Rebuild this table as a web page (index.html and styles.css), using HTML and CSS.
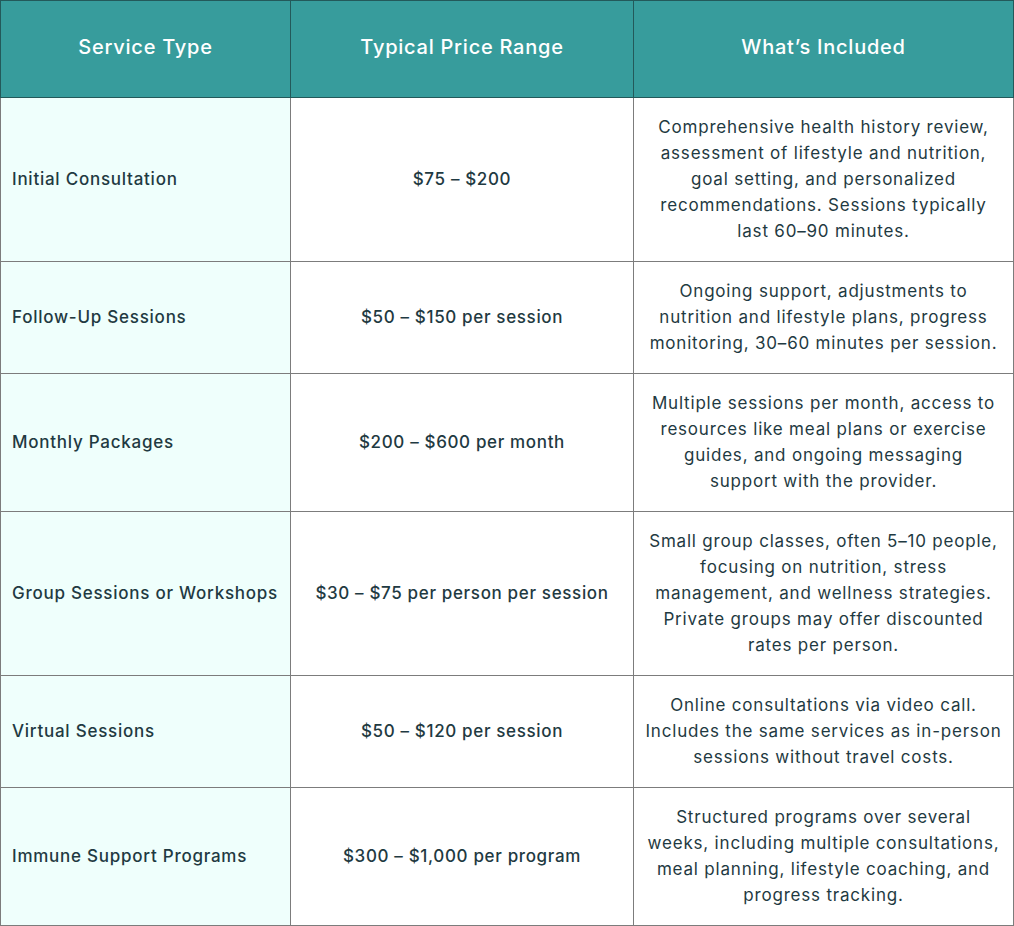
FILE: index.html
```html
<!DOCTYPE html>
<html lang="en">
<head>
<meta charset="utf-8">
<title>Service Pricing</title>
<link rel="stylesheet" href="styles.css">
</head>
<body>
<table class="pricing">
  <colgroup>
    <col class="c1">
    <col class="c2">
    <col class="c3">
  </colgroup>
  <thead>
    <tr>
      <th>Service Type</th>
      <th>Typical Price Range</th>
      <th>What’s Included</th>
    </tr>
  </thead>
  <tbody>
    <tr>
      <td class="name">Initial Consultation</td>
      <td class="price">$75 – $200</td>
      <td class="desc">Comprehensive health history review,<br>assessment of lifestyle and nutrition,<br>goal setting, and personalized<br>recommendations. Sessions typically<br>last 60–90 minutes.</td>
    </tr>
    <tr>
      <td class="name">Follow-Up Sessions</td>
      <td class="price">$50 – $150 per session</td>
      <td class="desc">Ongoing support, adjustments to<br>nutrition and lifestyle plans, progress<br>monitoring, 30–60 minutes per session.</td>
    </tr>
    <tr>
      <td class="name">Monthly Packages</td>
      <td class="price">$200 – $600 per month</td>
      <td class="desc">Multiple sessions per month, access to<br>resources like meal plans or exercise<br>guides, and ongoing messaging<br>support with the provider.</td>
    </tr>
    <tr>
      <td class="name">Group Sessions or Workshops</td>
      <td class="price">$30 – $75 per person per session</td>
      <td class="desc">Small group classes, often 5–10 people,<br>focusing on nutrition, stress<br>management, and wellness strategies.<br>Private groups may offer discounted<br>rates per person.</td>
    </tr>
    <tr>
      <td class="name">Virtual Sessions</td>
      <td class="price">$50 – $120 per session</td>
      <td class="desc">Online consultations via video call.<br>Includes the same services as in-person<br>sessions without travel costs.</td>
    </tr>
    <tr>
      <td class="name">Immune Support Programs</td>
      <td class="price">$300 – $1,000 per program</td>
      <td class="desc">Structured programs over several<br>weeks, including multiple consultations,<br>meal planning, lifestyle coaching, and<br>progress tracking.</td>
    </tr>
  </tbody>
</table>
</body>
</html>
```

FILE: styles.css
```css
html, body {
  margin: 0;
  padding: 0;
  background: #ffffff;
}

.pricing {
  width: 1013px;
  border-collapse: collapse;
  table-layout: fixed;
  font-family: "Inter", "Noto Sans", sans-serif;
  color: #1f3a42;
}

.c1 { width: 290px; }
.c2 { width: 343px; }
.c3 { width: 380px; }

.pricing th {
  background: #379c9c;
  color: #ffffff;
  font-size: 20px;
  font-weight: 500;
  line-height: 26px;
  letter-spacing: 0.75px;
  padding: 33px 12px 37px;
  border: 1px solid #23595a;
  text-align: center;
}

.pricing td {
  border: 1px solid #7c7c7c;
  font-size: 17px;
  line-height: 26px;
  letter-spacing: 0.85px;
  padding: 16px 11px 17px;
  vertical-align: middle;
  white-space: nowrap;
}

.pricing td.name {
  background: #effffc;
  font-weight: 500;
  text-align: left;
  letter-spacing: 0.75px;
}

.pricing td.price {
  font-weight: 500;
  text-align: center;
  letter-spacing: 0.65px;
}

.pricing td.desc {
  font-weight: 400;
  text-align: center;
  padding-left: 4px;
  padding-right: 4px;
  letter-spacing: 0.8px;
}
```
